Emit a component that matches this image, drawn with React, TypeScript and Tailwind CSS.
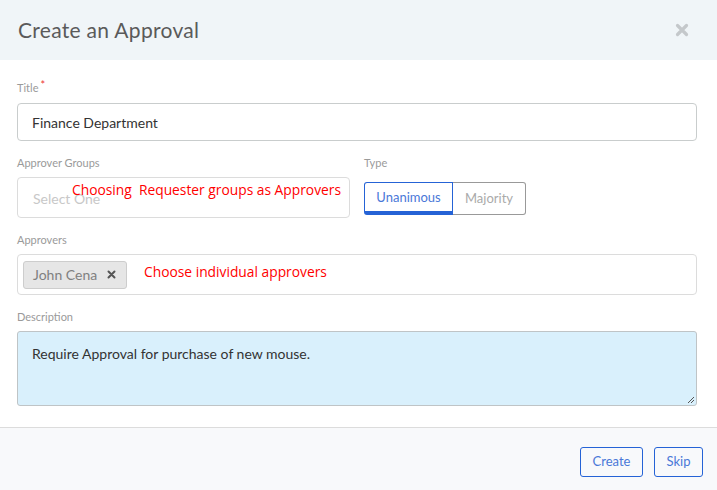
import React from "react";

export default function App() {
  return (
    <div className="w-[717px] h-[490px] bg-white flex flex-col overflow-hidden" style={{ fontFamily: "Lato, 'Open Sans', sans-serif" }}>
      <div className="h-[60px] bg-[#f0f5f8] flex items-center justify-between pl-[18px] pr-[28px] shrink-0">
        <div className="text-[21px] text-[#5a5a5a] tracking-[0.3px]">Create an Approval</div>
        <svg width="14" height="14" viewBox="0 0 14 14">
          <path d="M2.5 2.5 L11.5 11.5 M11.5 2.5 L2.5 11.5" stroke="#c4c8cb" strokeWidth="3.2" strokeLinecap="round" />
        </svg>
      </div>
      <div className="flex-1 pl-[17px] pr-[20px] pt-[21px] flex flex-col">
        <div className="text-[11px] text-[#9a9a9a] leading-[14px] flex">
          Title<span className="text-[#e33] text-[11px] leading-[8px] ml-[2px]">*</span>
        </div>
        <div className="mt-[8px] h-[38px] border border-[#c9cdcd] rounded-[4px] flex items-center pl-[14px] text-[14px] text-[#333]">
          Finance Department
        </div>
        <div className="flex mt-[15px]">
          <div className="w-[333px] flex flex-col">
            <div className="text-[11px] text-[#9a9a9a] leading-[14px]">Approver Groups</div>
            <div className="relative mt-[7px] h-[41px] border border-[#dcdcdc] rounded-[4px] flex items-center pl-[15px] text-[14px] text-[#c8c8c8]">
              <span className="mt-[2px]">Select One</span>
              <span className="absolute left-[54px] top-[2px] text-[13.8px] text-[#ff0000]" style={{ fontFamily: "'Open Sans', sans-serif" }}>
                Choosing&nbsp; Requester groups as Approvers
              </span>
            </div>
          </div>
          <div className="ml-[14px] flex flex-col">
            <div className="text-[11px] text-[#9a9a9a] leading-[14px]">Type</div>
            <div className="mt-[12px] flex h-[33px]">
              <div className="w-[89px] border border-[#2563d6] border-b-[4px] rounded-l-[3px] flex items-center justify-center text-[13px] text-[#4a78d8] pt-[2px]">
                Unanimous
              </div>
              <div className="w-[73px] border border-l-0 border-[#999] rounded-r-[3px] flex items-center justify-center text-[13px] text-[#aaa]">
                Majority
              </div>
            </div>
          </div>
        </div>
        <div className="text-[11px] text-[#9a9a9a] leading-[14px] mt-[15px]">Approvers</div>
        <div className="mt-[7px] h-[41px] border border-[#dcdcdc] rounded-[4px] flex items-center pl-[5px]">
          <div className="h-[28px] w-[104px] bg-[#e6e6e6] border border-[#cdcdcd] rounded-[3px] flex items-center pl-[9px] gap-[10px] text-[14px] text-[#808080]">
            John Cena
            <svg width="9" height="9" viewBox="0 0 9 9">
              <path d="M1.5 1.5 L7.5 7.5 M7.5 1.5 L1.5 7.5" stroke="#555" strokeWidth="2" strokeLinecap="round" />
            </svg>
          </div>
          <span className="ml-[17px] text-[13.8px] text-[#ff0000] -mt-[5px]" style={{ fontFamily: "'Open Sans', sans-serif" }}>
            Choose individual approvers
          </span>
        </div>
        <div className="text-[11px] text-[#9a9a9a] leading-[14px] mt-[15px]">Description</div>
        <div className="relative mt-[7px] h-[75px] bg-[#d9f0fc] border border-[#bfc4c6] rounded-[3px] pl-[14px] pt-[11px] text-[14px] text-[#333]">
          Require Approval for purchase of new mouse.
          <svg className="absolute right-[1px] bottom-[1px]" width="9" height="9" viewBox="0 0 9 9">
            <path d="M8 2 L2 8 M8 5 L5 8" stroke="#555" strokeWidth="1" />
          </svg>
        </div>
      </div>
      <div className="h-[63px] bg-[#f8f9fb] border-t border-[#dcdcdc] flex items-end justify-end pr-[14px] pb-[13px] gap-[11px] shrink-0">
        <div className="h-[30px] w-[63px] border border-[#2563d6] rounded-[3px] flex items-center justify-center text-[13px] text-[#4a78d8]">
          Create
        </div>
        <div className="h-[30px] w-[49px] border border-[#2563d6] rounded-[3px] flex items-center justify-center text-[13px] text-[#4a78d8]">
          Skip
        </div>
      </div>
    </div>
  );
}
